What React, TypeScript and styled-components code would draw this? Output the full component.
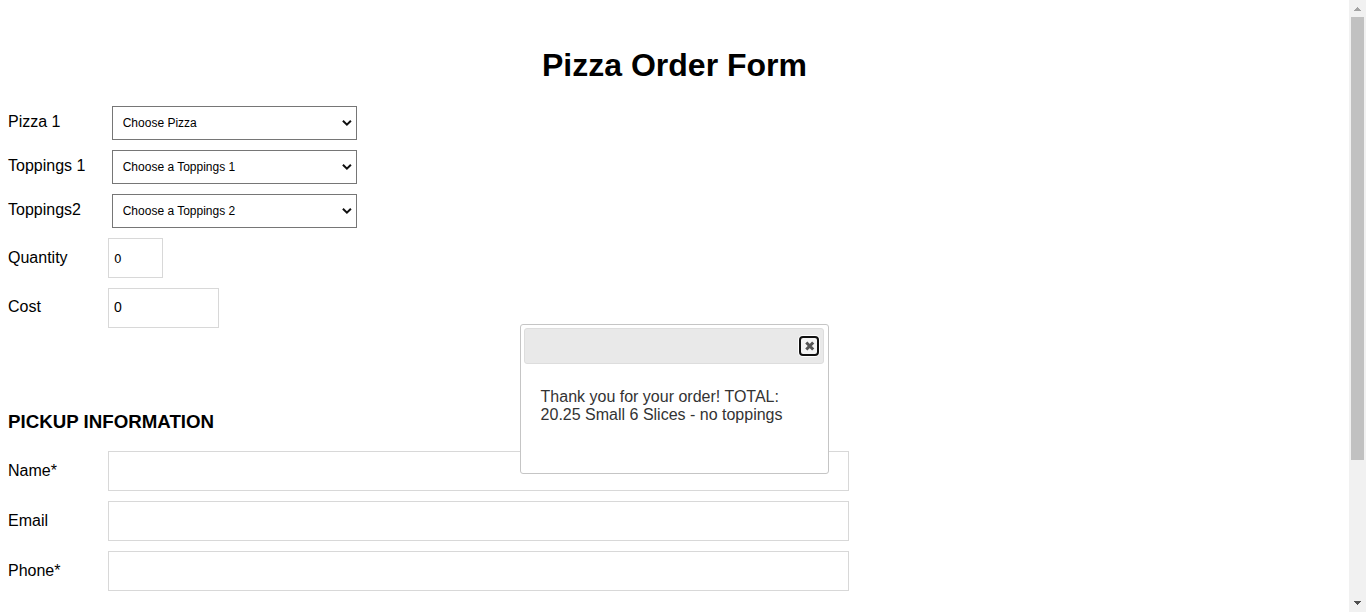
import React from "react";
import styled, { createGlobalStyle } from "styled-components";

const GlobalStyle = createGlobalStyle`
  html, body { margin: 0; background: #fff; overflow: hidden; }
  *, *::before, *::after { box-sizing: border-box; }
`;

const Window = styled.div`
  position: relative;
  display: flex;
  height: 612px;
  overflow: hidden;
  font: 16px/18px "Liberation Sans", Arial, sans-serif;
  color: #000;
`;

const Page = styled.main`
  flex: 1;
  padding: 0 8px;
`;

const Title = styled.h1`
  margin: 0;
  padding: 47px 0 22px;
  font-size: 32px;
  line-height: 37px;
  text-align: center;
`;

const Section = styled.section`
  display: flex;
  flex-direction: column;
  gap: 10px;
`;

const Row = styled.div<{ $lift?: number }>`
  display: flex;
  align-items: flex-start;

  label {
    width: 100px;
    padding-top: ${(p) => p.$lift ?? 11}px;
  }
`;

const Select = styled.button`
  display: flex;
  align-items: center;
  justify-content: space-between;
  width: 245px;
  height: 34px;
  margin: 0 0 0 4px;
  padding: 0 4px 0 9.7px;
  border: 1px solid #767676;
  background: #fff;
  color: #000;
  font: 12px "Liberation Sans", Arial, sans-serif;
`;

const Input = styled.input<{ $width: number; $font?: string; $pad?: string }>`
  width: ${(p) => p.$width}px;
  height: 40px;
  padding: ${(p) => p.$pad ?? "0 5px"};
  border: 1px solid #d8d8d8;
  border-radius: 0;
  background: #fff;
  color: #000;
  outline: none;
  font: ${(p) => p.$font ?? '13.333px "Liberation Sans", Arial, sans-serif'};
`;

const SectionTitle = styled.h2`
  margin: 0;
  padding: 83px 0 19px;
  font-size: 18.72px;
  line-height: 21px;
`;

const Dialog = styled.div`
  position: absolute;
  left: 520px;
  top: 324px;
  width: 309px;
  height: 150px;
  padding: 3px 4px 3px 3px;
  border: 1px solid #c5c5c5;
  border-radius: 3px;
  background: #fff;
  color: #333;
`;

const DialogBar = styled.div`
  display: flex;
  align-items: center;
  justify-content: flex-end;
  height: 36px;
  padding-right: 4px;
  border: 1px solid #ddd;
  border-radius: 3px;
  background: #e9e9e9;
`;

const CloseButton = styled.button`
  display: flex;
  align-items: center;
  justify-content: center;
  width: 20px;
  height: 20px;
  padding: 0 0 0 1px;
  border: 2px solid #101010;
  border-radius: 4px;
  background: #f4f4f4;
  box-shadow: 0 0 0 1px #fff;
`;

const DialogBody = styled.p`
  margin: 0;
  padding: 24px 16px 0 16.6px;
  line-height: 18px;
`;

const Scrollbar = styled.div`
  display: flex;
  flex-direction: column;
  align-items: center;
  width: 17px;
  background: #f1f1f1;
`;

const ScrollArrow = styled.div`
  display: flex;
  height: 17px;
`;

const Thumb = styled.div`
  width: 13px;
  height: 443px;
  margin-bottom: auto;
  background: #c1c1c1;
`;

const Chevron = () => (
  <svg width="11" height="8" viewBox="0 0 11 8" fill="none" stroke="#101010" strokeWidth="2">
    <path d="M1.9 1.8 L5.9 5.7 L9.9 1.8" />
  </svg>
);

const selects = [
  ["Pizza 1", "Choose Pizza"],
  ["Toppings 1", "Choose a Toppings 1"],
  ["Toppings2", "Choose a Toppings 2"],
];

export default function App() {
  return (
    <Window>
      <GlobalStyle />
      <Page>
        <Title>Pizza Order Form</Title>
        <Section>
          {selects.map(([label, value]) => (
            <Row key={label} $lift={7}>
              <label>{label}</label>
              <Select type="button">
                {value}
                <Chevron />
              </Select>
            </Row>
          ))}
          <Row>
            <label>Quantity</label>
            <Input
              $width={55}
              $pad="2px 5px 0"
              $font='12px "DejaVu Sans", sans-serif'
              defaultValue="0"
            />
          </Row>
          <Row $lift={10}>
            <label>Cost</label>
            <Input
              $width={111}
              $pad="0 5px 2px"
              $font='14px "Liberation Sans Narrow", "Liberation Sans", sans-serif'
              defaultValue="0"
            />
          </Row>
        </Section>
        <SectionTitle>PICKUP INFORMATION</SectionTitle>
        <Section>
          {["Name*", "Email", "Phone*"].map((label) => (
            <Row key={label}>
              <label>{label}</label>
              <Input $width={741} />
            </Row>
          ))}
        </Section>
      </Page>
      <Scrollbar>
        <ScrollArrow>
          <svg width="17" height="17" shapeRendering="crispEdges" fill="#a3a3a3">
            <path d="M8 7h1v1h1v1h1v1h1v1H5v-1h1V9h1V8h1z" />
          </svg>
        </ScrollArrow>
        <Thumb />
        <ScrollArrow>
          <svg width="17" height="17" shapeRendering="crispEdges" fill="#505050">
            <path d="M5 6h7v1h-1v1h-1v1H9v1H8V9H7V8H6V7H5z" />
          </svg>
        </ScrollArrow>
      </Scrollbar>
      <Dialog role="dialog">
        <DialogBar>
          <CloseButton type="button" aria-label="Close">
            <svg width="10" height="10" viewBox="0 0 10 10" stroke="#555" strokeWidth="3">
              <path d="M1.3 1.5 L8.2 8.5 M8.2 1.5 L1.3 8.5" />
            </svg>
          </CloseButton>
        </DialogBar>
        <DialogBody>Thank you for your order! TOTAL: 20.25 Small 6 Slices - no toppings</DialogBody>
      </Dialog>
    </Window>
  );
}
